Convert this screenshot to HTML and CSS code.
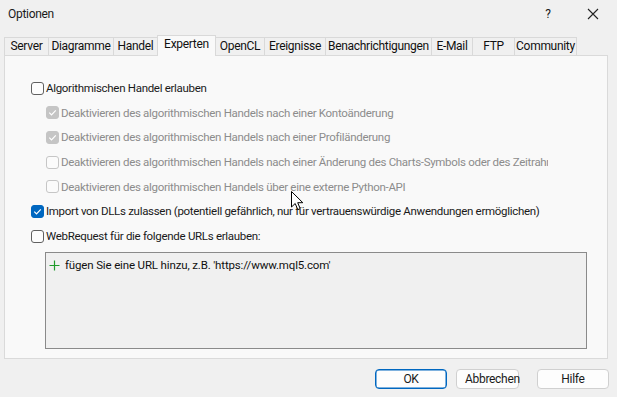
FILE: index.html
```html
<!DOCTYPE html>
<html lang="de">
<head>
<meta charset="utf-8">
<title>Optionen</title>
<link rel="stylesheet" href="styles.css">
</head>
<body>
<div class="window">
  <div class="titlebar">
    <span class="title">Optionen</span>
    <div class="title-btns">
      <span class="help">?</span>
      <svg class="close" width="12" height="12" viewBox="0 0 12 12"><path d="M1 1 L11 11 M11 1 L1 11" stroke="#222" stroke-width="1.1" fill="none"/></svg>
    </div>
  </div>

  <div class="tabs">
    <div class="tab t-server">Server</div>
    <div class="tab t-diag">Diagramme</div>
    <div class="tab t-handel">Handel</div>
    <div class="tab t-exp active">Experten</div>
    <div class="tab t-ocl">OpenCL</div>
    <div class="tab t-ereig">Ereignisse</div>
    <div class="tab t-bena">Benachrichtigungen</div>
    <div class="tab t-mail">E-Mail</div>
    <div class="tab t-ftp">FTP</div>
    <div class="tab t-comm">Community</div>
  </div>

  <div class="panel">
    <div class="row">
      <span class="cb"></span>
      <span class="label">Algorithmischen Handel erlauben</span>
    </div>
    <div class="row sub disabled">
      <span class="cb checked-dis"><svg width="11" height="11" viewBox="0 0 11 11"><path d="M2.3 5.6 L4.5 7.8 L8.8 3.3" stroke="#fff" stroke-width="1.2" fill="none"/></svg></span>
      <span class="label">Deaktivieren des algorithmischen Handels nach einer Kontoänderung</span>
    </div>
    <div class="row sub disabled">
      <span class="cb checked-dis"><svg width="11" height="11" viewBox="0 0 11 11"><path d="M2.3 5.6 L4.5 7.8 L8.8 3.3" stroke="#fff" stroke-width="1.2" fill="none"/></svg></span>
      <span class="label">Deaktivieren des algorithmischen Handels nach einer Profiländerung</span>
    </div>
    <div class="row sub disabled clip">
      <span class="cb unchecked-dis"></span>
      <span class="label">Deaktivieren des algorithmischen Handels nach einer Änderung des Charts-Symbols oder des Zeitrahmens</span>
    </div>
    <div class="row sub disabled">
      <span class="cb unchecked-dis"></span>
      <span class="label">Deaktivieren des algorithmischen Handels über eine externe Python-API</span>
    </div>
    <div class="row">
      <span class="cb checked"><svg width="11" height="11" viewBox="0 0 11 11"><path d="M2.3 5.6 L4.5 7.8 L8.8 3.3" stroke="#fff" stroke-width="1.2" fill="none"/></svg></span>
      <span class="label">Import von DLLs zulassen (potentiell gefährlich, nur für vertrauenswürdige Anwendungen ermöglichen)</span>
    </div>
    <div class="row">
      <span class="cb"></span>
      <span class="label">WebRequest für die folgende URLs erlauben:</span>
    </div>
    <div class="urlbox">
      <div class="urlrow">
        <svg class="plus" width="11" height="11" viewBox="0 0 11 11"><path d="M5.5 0.5 V10.5 M0.5 5.5 H10.5" stroke="#1f9b2a" stroke-width="1.2" fill="none"/></svg>
        <span>fügen Sie eine URL hinzu, z.B. 'https://www.mql5.com'</span>
      </div>
    </div>
    <svg class="cursor" width="13" height="20" viewBox="0 0 13 20"><path d="M0.5 0.5 L0.5 16 L4.2 12.5 L6.8 18.6 L9.2 17.6 L6.7 11.7 L11.8 11.7 Z" fill="#fff" stroke="#000" stroke-width="1" stroke-linejoin="round"/></svg>
  </div>

  <div class="footer">
    <button class="btn primary">OK</button>
    <button class="btn cancel">Abbrechen</button>
    <button class="btn">Hilfe</button>
  </div>
</div>
</body>
</html>
```

FILE: styles.css
```css
* { box-sizing: border-box; }
html, body { margin: 0; padding: 0; }
body {
  width: 617px;
  height: 397px;
  background: #f0f0f0;
  font-family: Roboto, "Liberation Sans", sans-serif;
  font-size: 11.5px;
  letter-spacing: -0.3px;
  color: #1a1a1a;
  overflow: hidden;
}
.window { width: 617px; height: 397px; display: flex; flex-direction: column; }
.titlebar {
  height: 28px;
  display: flex;
  align-items: center;
  justify-content: space-between;
  padding: 0 0 0 8px;
}
.title { font-size: 12px; color: #1a1a1a; }
.title-btns { display: flex; align-items: center; }
.help { width: 46px; text-align: center; font-size: 12px; margin-right: 16px; }
.close { margin: 0 18px 0 0; }

.tabs {
  display: flex;
  align-items: flex-end;
  margin: 7px 0 0 4px;
  height: 20px;
  position: relative;
  z-index: 1;
}
.tab {
  height: 18px;
  line-height: 16px;
  border: 1px solid #d9d9d9;
  border-bottom: none;
  border-right: none;
  background: #f0f0f0;
  text-align: center;
  color: #111;
  white-space: nowrap;
  font-size: 12px;
}
.tab.t-comm { border-right: 1px solid #d9d9d9; }
.tab.active {
  height: 21px;
  line-height: 16px;
  background: #f9f9f9;
  border-right: 1px solid #d9d9d9;
  margin-bottom: -1px;
}
.tab.active + .tab { border-left: none; }
.t-server { width: 44px; }
.t-diag { width: 65px; }
.t-handel { width: 44px; }
.t-exp { width: 59px; }
.t-ocl { width: 48px; }
.t-ereig { width: 61px; }
.t-bena { width: 106px; }
.t-mail { width: 41px; }
.t-ftp { width: 42px; }
.t-comm { width: 63px; }

.panel {
  position: relative;
  margin: 0 9px 0 4px;
  height: 304px;
  background: #f9f9f9;
  border: 1px solid #dadada;
  padding: 24px 0 0 26px;
  display: flex;
  flex-direction: column;
  gap: 8.7px;
}
.row {
  display: flex;
  align-items: center;
  height: 16px;
  gap: 2px;
  white-space: nowrap;
}
.row.sub { padding-left: 15px; }
.row.clip { width: 517px; overflow: hidden; }
.disabled .label { color: #8c8c8c; }
.cb {
  flex: none;
  width: 13px;
  height: 13px;
  border: 1px solid #616161;
  border-radius: 3px;
  background: #fdfdfd;
  display: flex;
  align-items: center;
  justify-content: center;
}
.cb svg { display: block; }
.cb.checked { background: #0067c0; border-color: #0067c0; }
.cb.checked-dis { background: #c5c5c5; border-color: #c5c5c5; }
.cb.unchecked-dis { border-color: #c6c6c6; background: #fbfbfb; }

.urlbox {
  margin: -0.7px 0 0 14px;
  width: 542px;
  height: 97px;
  border: 1px solid #8a8a8a;
  background: #f0f0f0;
  padding: 5px 0 0 3px;
}
.urlrow { display: flex; align-items: center; gap: 5px; font-size: 11.5px; letter-spacing: -0.15px; color: #111; }
.plus { flex: none; }

.cursor { position: absolute; left: 286px; top: 135px; }

.footer {
  display: flex;
  gap: 9px;
  padding: 10px 0 0 375px;
}
.btn {
  height: 20px;
  width: 72px;
  font-family: inherit;
  font-size: 12px;
  letter-spacing: -0.3px;
  color: #1a1a1a;
  background: #fdfdfd;
  border: 1px solid #d0d0d0;
  border-radius: 4px;
  padding: 0;
}
.btn.primary { border-color: #0067c0; box-shadow: inset 0 0 0 0.5px #0067c0; }
.btn.cancel { width: 63px; padding-left: 8px; text-align: left; margin-right: 9px; }
```
